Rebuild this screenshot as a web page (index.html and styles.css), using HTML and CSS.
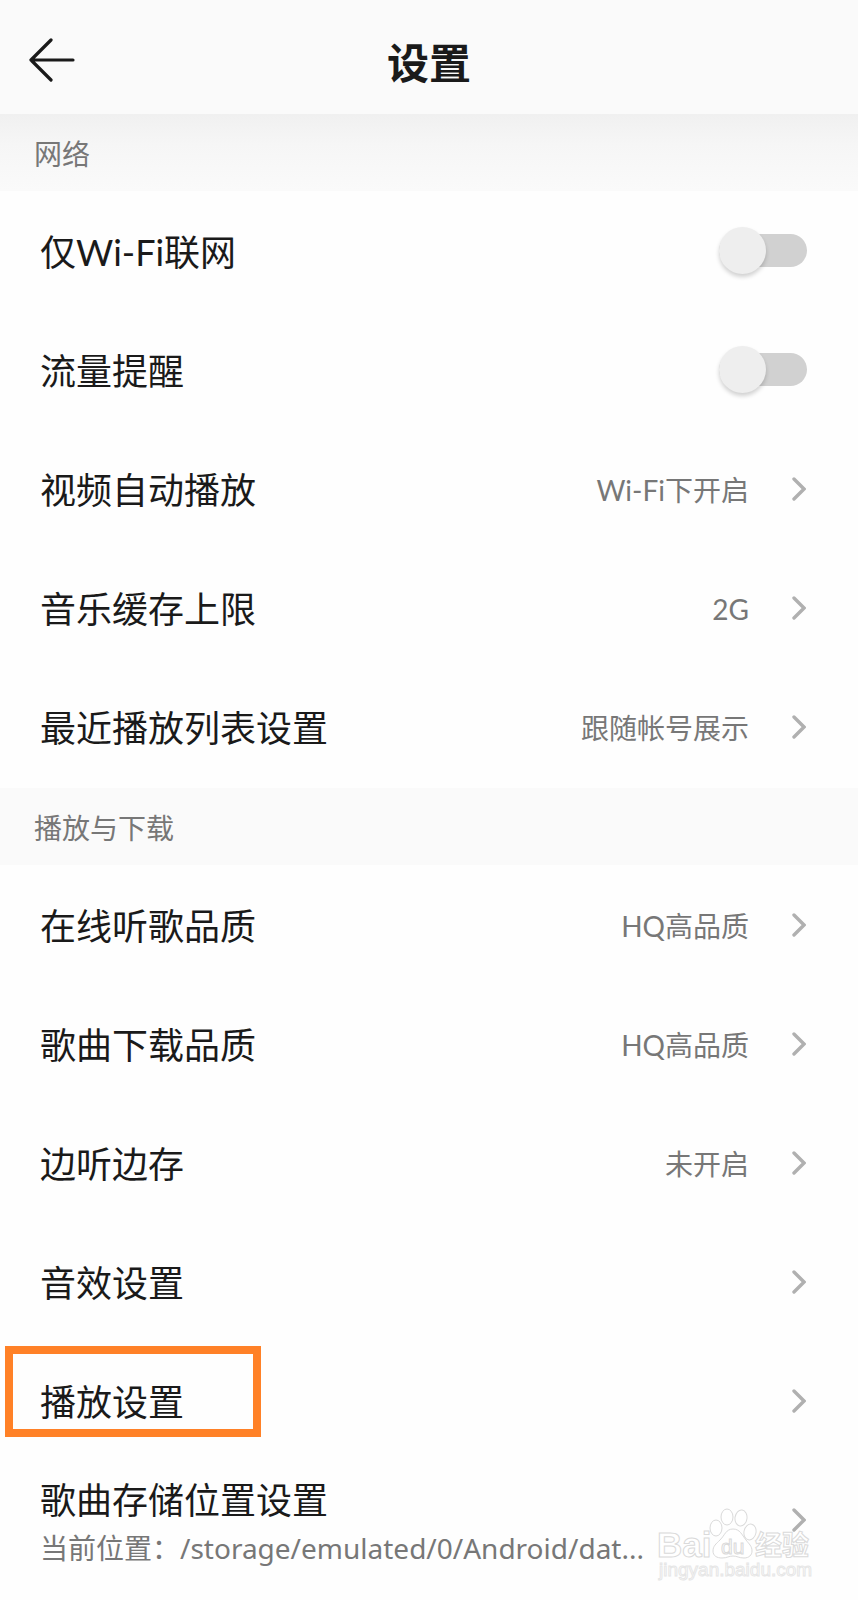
FILE: index.html
```html
<!DOCTYPE html>
<html lang="zh-CN">
  <head>
    <meta charset="UTF-8" />
    <meta name="viewport" content="width=device-width, initial-scale=1.0" />
    <title>设置</title>
    <link rel="stylesheet" href="styles.css">
  </head>
  <body>
    <!-- icons -->
    <svg class="icon-defs" width="0" height="0" aria-hidden="true">
      <symbol id="chevron" viewBox="0 0 14 24">
        <path d="M2 2 L12 12 L2 22" fill="none" stroke="#b0b0b0" stroke-width="3.4" stroke-linecap="round" stroke-linejoin="miter" />
      </symbol>
    </svg>

    <header class="header">
      <button type="button" class="back" aria-label="返回">
        <svg width="46" height="44" viewBox="0 0 46 44" fill="none" stroke="#1a1a1a" stroke-width="3.2" stroke-linecap="round" stroke-linejoin="round">
          <path d="M22 2 L2 22 L22 42 M2 22 H44" />
        </svg>
      </button>
      <h1>设置</h1>
    </header>

    <main>
      <section class="group">
        <h2 class="group-title first">网络</h2>
        <div class="row">
          <label class="label" for="wifiOnly">仅Wi-Fi联网</label>
          <input type="checkbox" id="wifiOnly" class="switch" />
        </div>
        <div class="row">
          <label class="label" for="dataAlert">流量提醒</label>
          <input type="checkbox" id="dataAlert" class="switch" />
        </div>
        <button type="button" class="row">
          <span class="label">视频自动播放</span>
          <span class="value">Wi-Fi下开启</span>
          <svg class="chevron"><use href="#chevron" /></svg>
        </button>
        <button type="button" class="row">
          <span class="label">音乐缓存上限</span>
          <span class="value">2G</span>
          <svg class="chevron"><use href="#chevron" /></svg>
        </button>
        <button type="button" class="row">
          <span class="label">最近播放列表设置</span>
          <span class="value">跟随帐号展示</span>
          <svg class="chevron"><use href="#chevron" /></svg>
        </button>
      </section>

      <section class="group">
        <h2 class="group-title">播放与下载</h2>
        <button type="button" class="row">
          <span class="label">在线听歌品质</span>
          <span class="value">HQ高品质</span>
          <svg class="chevron"><use href="#chevron" /></svg>
        </button>
        <button type="button" class="row">
          <span class="label">歌曲下载品质</span>
          <span class="value">HQ高品质</span>
          <svg class="chevron"><use href="#chevron" /></svg>
        </button>
        <button type="button" class="row">
          <span class="label">边听边存</span>
          <span class="value">未开启</span>
          <svg class="chevron"><use href="#chevron" /></svg>
        </button>
        <button type="button" class="row">
          <span class="label">音效设置</span>
          <svg class="chevron"><use href="#chevron" /></svg>
        </button>
        <button type="button" class="row highlight">
          <span class="label">播放设置</span>
          <svg class="chevron"><use href="#chevron" /></svg>
        </button>
        <button type="button" class="row">
          <span class="label storage">
            歌曲存储位置设置
            <span class="path">当前位置：/storage/emulated/0/Android/dat...</span>
          </span>
          <svg class="chevron"><use href="#chevron" /></svg>
        </button>
      </section>
    </main>

    <svg class="watermark" width="160" height="76" viewBox="0 0 160 76" aria-label="Baidu经验">
      <text class="wm-brand" x="1" y="51">Bai</text>
      <g class="wm-paw">
        <ellipse cx="60" cy="22" rx="6" ry="8" />
        <ellipse cx="71" cy="11" rx="6" ry="8" />
        <ellipse cx="85" cy="12" rx="6" ry="8" transform="rotate(8 85 12)" />
        <ellipse cx="94" cy="26" rx="6" ry="8" transform="rotate(12 94 26)" />
        <path d="M77 23 C70 23 69 29 64 34 C60 38 57 40 57 45 C57 50 61 52 66 52 C71 52 73 50 77 50 C81 50 83 52 88 52 C93 52 96 49 96 45 C96 40 93 38 90 34 C86 29 84 23 77 23 Z" />
      </g>
      <text class="wm-du" x="65" y="48">du</text>
      <text class="wm-cn" x="99" y="49">经验</text>
      <text class="wm-url" x="3" y="70">jingyan.baidu.com</text>
    </svg>
  </body>
</html>
```
FILE: styles.css
```css
* {
  box-sizing: border-box;
}

body {
  position: relative;
  min-height: 1600px;
  margin: 0;
  background-color: #fefefe;
  color: #1a1a1a;
  font-family: Lato, "Noto Sans CJK SC", sans-serif;
}

.icon-defs {
  position: absolute;
}

.header {
  display: grid;
  grid-template-columns: 76px 1fr 76px;
  align-items: center;
  height: 114px;
  padding-top: 12px;
  background-color: #fafafa;
}

.header h1 {
  margin: 0;
  font-size: 42px;
  line-height: 60px;
  font-weight: 700;
  text-align: center;
}

.back {
  height: 56px;
  padding: 0 0 6px 29px;
  border: 0;
  background: none;
  cursor: pointer;
}

.back svg {
  display: block;
}

.group {
  padding-bottom: 2px;
}

.group-title {
  height: 77px;
  margin: 0;
  padding: 2px 34px 0;
  background-color: #fafafa;
  color: #777;
  font-size: 28px;
  line-height: 76px;
  font-weight: 400;
}

.group-title.first {
  background: linear-gradient(#f0f0f0, #f6f6f6 40%, #fafafa);
}

.row {
  position: relative;
  display: flex;
  align-items: center;
  width: 100%;
  height: 119px;
  padding: 0 52px 0 40px;
  border: 0;
  background: none;
  color: inherit;
  font: inherit;
  text-align: left;
}

button.row {
  cursor: pointer;
}

.label {
  flex: 1;
  padding-top: 3px;
  font-size: 36px;
  line-height: 48px;
}

.value {
  padding-top: 3px;
  color: #777;
  font-size: 28px;
  line-height: 40px;
}

.chevron {
  flex: none;
  width: 14px;
  height: 24px;
  margin-left: 43px;
}

.storage {
  padding-top: 9px;
}

.path {
  display: block;
  color: #777;
  font-family: "Noto Sans", "Noto Sans CJK SC", sans-serif;
  font-size: 28px;
  white-space: nowrap;
}

/* switch */
.switch {
  appearance: none;
  display: flex;
  align-items: center;
  width: 88px;
  height: 33px;
  margin: 0 -1px 0 0;
  background-color: #d1d1d1;
  border-radius: 24px;
  cursor: pointer;
}

.switch::before {
  content: "";
  flex: none;
  width: 47px;
  height: 47px;
  border-radius: 50%;
  background-color: #eee;
  box-shadow: 0 3px 4px rgba(0, 0, 0, 0.18);
}

.switch:checked {
  justify-content: flex-end;
  background-color: #31c27c;
}

.highlight::after {
  content: "";
  position: absolute;
  top: 5px;
  left: 5px;
  box-sizing: border-box;
  width: 256px;
  height: 91px;
  border: 8px solid #ff8127;
}

/* watermark */
.watermark {
  position: absolute;
  top: 1506px;
  right: 42px;
  overflow: visible;
  fill: #fff;
  stroke: #dadada;
  stroke-width: 1px;
  pointer-events: none;
}

.wm-brand {
  font: 700 35px "Liberation Sans", sans-serif;
}

.wm-du {
  font: 400 21px "Liberation Sans", sans-serif;
}

.wm-cn {
  font: 700 27px "Noto Sans CJK SC", sans-serif;
}

.wm-url {
  font: 400 19px "Liberation Sans", sans-serif;
  stroke: #e6e6e6;
}
```
